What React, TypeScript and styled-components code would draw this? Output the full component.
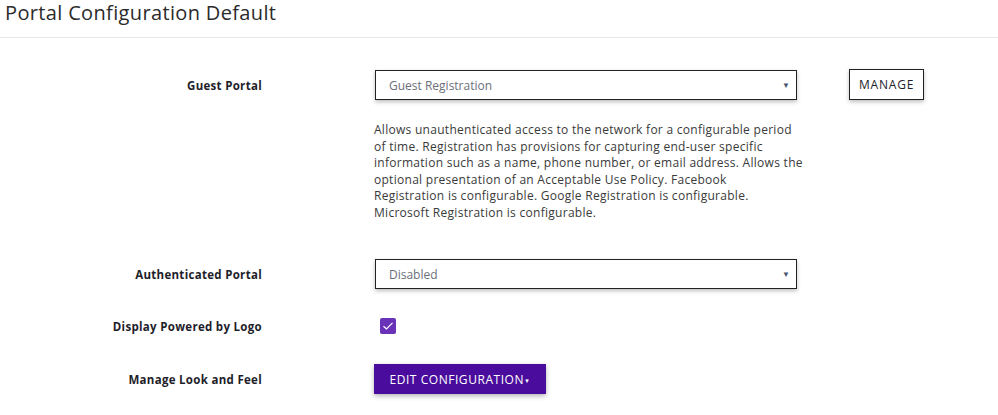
import styled, { createGlobalStyle } from "styled-components";

const GlobalStyle = createGlobalStyle`
  html, body {
    margin: 0;
    padding: 0;
    background: #fff;
    font-family: "Open Sans", "Lato", sans-serif;
    color: #222;
  }
`;

const Page = styled.div`
  width: 998px;
  height: 415px;
  overflow: hidden;
`;

const Header = styled.div`
  height: 38px;
  border-bottom: 1px solid #e6e6e6;
  box-sizing: border-box;
  padding: 0 0 0 5px;
`;

const Title = styled.h1`
  margin: 0;
  font-size: 20px;
  line-height: 26px;
  font-weight: 400;
  letter-spacing: 0.35px;
  color: #2b2b2b;
`;

const Form = styled.div`
  display: grid;
  grid-template-columns: 262px 422px auto;
  padding-top: 32px;
`;

const Label = styled.div`
  grid-column: 1;
  font-size: 11.5px;
  font-weight: 700;
  letter-spacing: 0.3px;
  color: #1e1e2a;
  height: 30px;
  display: flex;
  align-items: center;
  justify-content: flex-end;
`;

const Control = styled.div<{ $center?: boolean }>`
  grid-column: 2;
  margin-left: 113px;
  display: flex;
  flex-direction: column;
  justify-content: ${(p) => (p.$center ? "center" : "flex-start")};
`;

const Extra = styled.div`
  grid-column: 3;
  margin-left: 165px;
`;

const Select = styled.div`
  width: 422px;
  height: 30px;
  box-sizing: border-box;
  border: 1px solid #222;
  box-shadow: 0 2px 4px rgba(0, 0, 0, 0.25);
  display: flex;
  align-items: center;
  justify-content: space-between;
  padding: 0 6px 0 13px;
  font-size: 12px;
  color: #6b6f7b;
  background: #fff;
`;

const Caret = styled.span`
  font-size: 8px;
  color: #4a5570;
  margin-top: -2px;
`;

const ManageButton = styled.button`
  height: 31px;
  margin-top: -1px;
  padding: 0 9px;
  border: 1px solid #222;
  background: #fff;
  box-shadow: 0 2px 4px rgba(0, 0, 0, 0.25);
  font-family: inherit;
  font-size: 12px;
  letter-spacing: 0.8px;
  color: #1e1e2a;
`;

const Description = styled.p`
  margin: 22px 0 0 -1px;
  width: 440px;
  font-size: 12px;
  line-height: 16.5px;
  letter-spacing: 0.28px;
  color: #3a3a3a;
`;

const Spacer = styled.div<{ $h: number }>`
  grid-column: 1 / -1;
  height: ${(p) => p.$h}px;
`;

const Checkbox = styled.div`
  width: 16px;
  height: 16px;
  margin-left: 5px;
  border-radius: 2px;
  background: #6a32b8;
  display: flex;
  align-items: center;
  justify-content: center;
`;

const EditButton = styled.button`
  width: 172px;
  height: 30px;
  margin-left: -1px;
  border: none;
  background: #4a0c9c;
  box-shadow: 0 2px 5px rgba(0, 0, 0, 0.3);
  color: #fff;
  font-family: inherit;
  font-size: 12px;
  letter-spacing: 0.55px;
  display: flex;
  align-items: center;
  justify-content: center;
`;

const SmallCaret = styled.span`
  font-size: 6px;
  margin-top: 4px;
`;

const lines = [
  "Allows unauthenticated access to the network for a configurable period",
  "of time. Registration has provisions for capturing end-user specific",
  "information such as a name, phone number, or email address. Allows the",
  "optional presentation of an Acceptable Use Policy. Facebook",
  "Registration is configurable. Google Registration is configurable.",
  "Microsoft Registration is configurable.",
];

export default function App() {
  return (
    <Page>
      <GlobalStyle />
      <Header>
        <Title>Portal Configuration Default</Title>
      </Header>
      <Form>
        <Label>Guest Portal</Label>
        <Control>
          <Select>
            Guest Registration
            <Caret>▼</Caret>
          </Select>
          <Description>
            {lines.map((l, i) => (
              <span key={i}>
                {l}
                {i < lines.length - 1 && <br />}
              </span>
            ))}
          </Description>
        </Control>
        <Extra>
          <ManageButton>MANAGE</ManageButton>
        </Extra>

        <Spacer $h={38} />

        <Label>Authenticated Portal</Label>
        <Control>
          <Select>
            Disabled
            <Caret>▼</Caret>
          </Select>
        </Control>

        <Spacer $h={22} />

        <Label>Display Powered by Logo</Label>
        <Control $center>
          <Checkbox>
            <svg width="12" height="10" viewBox="0 0 12 10">
              <path d="M1.5 5.2 L4.5 8 L10.5 1.8" fill="none" stroke="#fff" strokeWidth="1.2" />
            </svg>
          </Checkbox>
        </Control>

        <Spacer $h={23} />

        <Label>Manage Look and Feel</Label>
        <Control>
          <EditButton>
            EDIT CONFIGURATION<SmallCaret>▼</SmallCaret>
          </EditButton>
        </Control>
      </Form>
    </Page>
  );
}
